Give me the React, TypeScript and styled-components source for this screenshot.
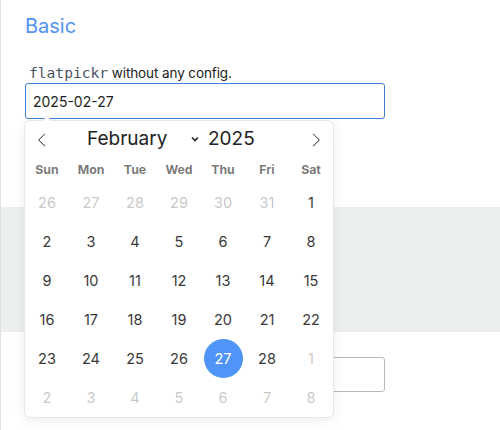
import styled, { createGlobalStyle } from 'styled-components'

const GlobalStyle = createGlobalStyle`
  html, body {
    margin: 0;
    padding: 0;
    background: #fff;
  }
  body {
    font-family: Inter, Lato, sans-serif;
    color: #222;
  }
`

// ページ全体
const Page = styled.div`
  width: 500px;
  height: 430px;
  border-left: 1px solid #e2e2e2;
  box-sizing: border-box;
  overflow: hidden;
`

const Section = styled.div`
  padding: 0 24px;
`

const Title = styled.h2`
  margin: 12px 0 0;
  font-size: 20px;
  line-height: 28px;
  font-weight: 400;
  color: #5291f4;
`

const Label = styled.p`
  margin: 23px 0 0;
  font-size: 13.5px;
  line-height: 20px;
  color: #222;
  letter-spacing: -0.1px;
`

const Code = styled.code`
  font-family: 'DejaVu Sans Mono', monospace;
  font-size: 14.6px;
  color: #4a5563;
  margin-left: 4px;
  letter-spacing: 0;
`

const Field = styled.div`
  position: relative;
  width: 360px;
`

const Input = styled.div<{ $active?: boolean }>`
  box-sizing: border-box;
  height: ${({ $active }) => ($active ? 36 : 35)}px;
  width: 360px;
  border: 1px solid ${({ $active }) => ($active ? '#3f80dc' : '#b8b8b8')};
  border-radius: 3px;
  padding: 0 7px;
  display: flex;
  align-items: center;
  font-size: 14px;
  color: #1e1e1e;
  background: #fff;
`

const Band = styled.div`
  margin-top: 88px;
  height: 125px;
  background: #ebeff0;
`

const Lower = styled(Section)`
  padding-top: 25px;
`

// カレンダー本体
const Calendar = styled.div`
  position: absolute;
  top: 38px;
  left: 0;
  width: 308px;
  height: 296px;
  background: #fff;
  border-radius: 5px;
  box-shadow: 1px 0 0 #e6e6e6, -1px 0 0 #e6e6e6, 0 1px 0 #e6e6e6,
    0 -1px 0 #e6e6e6, 0 3px 13px rgba(0, 0, 0, 0.08);
  z-index: 5;

  &::before,
  &::after {
    content: '';
    position: absolute;
    left: 22px;
    border: solid transparent;
    height: 0;
    width: 0;
  }
  &::before {
    border-width: 5px;
    margin-left: -5px;
    bottom: 100%;
    border-bottom-color: #e6e6e6;
  }
  &::after {
    border-width: 4px;
    margin-left: -4px;
    bottom: 100%;
    border-bottom-color: #fff;
  }
`

const Months = styled.div`
  height: 34px;
  display: flex;
  align-items: center;
`

const NavArrow = styled.span`
  width: 34px;
  height: 34px;
  padding-top: 4px;
  box-sizing: border-box;
  display: flex;
  align-items: center;
  justify-content: center;
  fill: #3c3c3c;
  svg {
    width: 14px;
    height: 14px;
  }
`

const CurrentMonth = styled.div`
  flex: 1;
  display: flex;
  align-items: center;
  padding-left: 28px;
  padding-top: 1px;
  font-size: 19px;
  color: #222;
`

const MonthName = styled.span`
  width: 103px;
`

const Chevron = styled.svg`
  width: 10px;
  height: 10px;
  margin-right: 8px;
`

const Year = styled.span``

const Weekdays = styled.div`
  height: 28px;
  display: grid;
  grid-template-columns: repeat(7, 1fr);
  align-items: center;
`

const Weekday = styled.span`
  text-align: center;
  font-size: 12.3px;
  font-weight: 700;
  color: rgba(0, 0, 0, 0.54);
`

const Days = styled.div`
  display: grid;
  grid-template-columns: repeat(7, 1fr);
  grid-auto-rows: 39px;
  justify-items: center;
`

const Day = styled.span<{ $muted?: boolean; $selected?: boolean }>`
  width: 39px;
  height: 39px;
  border-radius: 50%;
  display: flex;
  align-items: center;
  justify-content: center;
  font-size: 14.5px;
  color: ${({ $muted, $selected }) =>
    $selected ? '#fff' : $muted ? 'rgba(57, 57, 57, 0.3)' : '#393939'};
  background: ${({ $selected }) => ($selected ? '#4f94f6' : 'transparent')};
`

const weekdays = ['Sun', 'Mon', 'Tue', 'Wed', 'Thu', 'Fri', 'Sat']

const days = [
  ...[26, 27, 28, 29, 30, 31].map((d) => ({ d, muted: true })),
  ...Array.from({ length: 28 }, (_, i) => ({ d: i + 1, muted: false })),
  ...[1, 2, 3, 4, 5, 6, 7, 8].map((d) => ({ d, muted: true })),
]

const App = () => {
  return (
    <>
      <GlobalStyle />
      <Page>
        <Section>
          <Title>Basic</Title>
          <Label>
            <Code>flatpickr</Code> without any config.
          </Label>
          <Field>
            <Input $active>2025-02-27</Input>
            <Calendar>
              <Months>
                <NavArrow>
                  <svg viewBox="0 0 17 17">
                    <path d="M5.207 8.471l7.146 7.147-0.707 0.707-7.853-7.854 7.854-7.853 0.707 0.707-7.147 7.146z" />
                  </svg>
                </NavArrow>
                <CurrentMonth>
                  <MonthName>February</MonthName>
                  <Chevron viewBox="0 0 10 10">
                    <path d="M2 3.5 L5 6.5 L8 3.5" fill="none" stroke="#222" strokeWidth="1.6" />
                  </Chevron>
                  <Year>2025</Year>
                </CurrentMonth>
                <NavArrow>
                  <svg viewBox="0 0 17 17">
                    <path d="M13.207 8.472l-7.854 7.854-0.707-0.707 7.146-7.146-7.146-7.148 0.707-0.707 7.854 7.854z" />
                  </svg>
                </NavArrow>
              </Months>
              <Weekdays>
                {weekdays.map((w) => (
                  <Weekday key={w}>{w}</Weekday>
                ))}
              </Weekdays>
              <Days>
                {days.map((x, i) => (
                  <Day key={i} $muted={x.muted} $selected={!x.muted && x.d === 27}>
                    {x.d}
                  </Day>
                ))}
              </Days>
            </Calendar>
          </Field>
        </Section>
        <Band />
        <Lower>
          <Input />
        </Lower>
      </Page>
    </>
  )
}

export default App
